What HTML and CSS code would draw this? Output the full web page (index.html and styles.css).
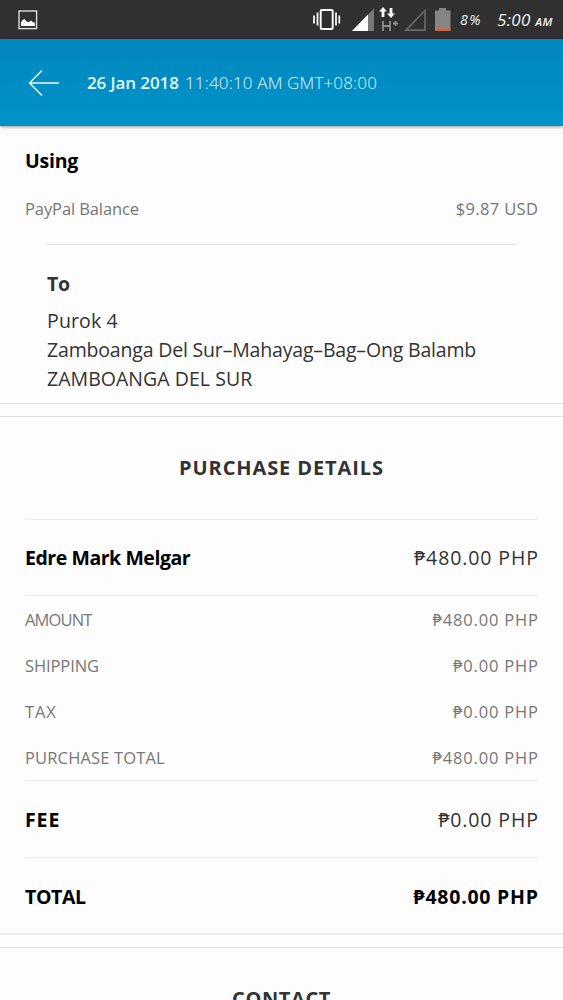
FILE: index.html
```html
<!DOCTYPE html>
<html lang="en">
<head>
<meta charset="utf-8">
<title>Transaction details</title>
<link rel="stylesheet" href="styles.css">
</head>
<body>
<div class="status-bar">
  <svg class="gallery" width="20" height="20" viewBox="0 0 20 20"><rect x="1" y="1" width="17.6" height="17.6" fill="none" stroke="#dcdcdc" stroke-width="1.4"/><path d="M3 16V12.500l1.500-2.500 2-1L8.500 11.500l2 .8 2.500-1.800 1.500 1.500H16l1 1.500V16z" fill="#fff"/></svg>
  <svg class="status-icons" width="152" height="39" viewBox="0 0 152 39">
    <g fill="none" stroke="#fff"><rect x="10.700" y="10" width="12" height="19" rx="1" stroke-width="1.900"/><path d="M7.500 12.500v13M26 12.500v13M4 15.500v8M29.300 15.500v8" stroke-width="1.700"/></g>
    <path d="M64 8.500V31H42z" fill="#777"/><path d="M58 14.500V31H42z" fill="#fff"/>
    <path d="M69 11.500L73 7l4 4.500h-2.600V17h-2.800v-5.500zM77 13.500h2.600V8h2.800v5.500H85L81 18z" fill="#fff"/>
    <path d="M73 21v10M80 21v10M73 26h7M83 23.500h5M85.500 21v5" fill="none" stroke="#8d8d8d" stroke-width="1.800"/>
    <path d="M115 10.500V30.200H96z" fill="none" stroke="#686868" stroke-width="1.700"/>
    <path d="M125 10.500h4V8h7v2.500h4.500V31H125z" fill="#858585"/><path d="M125 28.500h15.500V31H125z" fill="#d8643a"/>
  </svg>
  <span class="battery-text">8%</span>
  <span class="clock">5:00 <small>AM</small></span>
</div>
<header class="app-bar">
  <svg width="32" height="28" viewBox="0 0 32 28"><path d="M14 1.500L1.500 14 14 26.500M1.500 14H31" fill="none" stroke="#e8fbff" stroke-width="1.500"/></svg>
  <span class="date">26 Jan 2018</span><span class="time">11:40:10 AM GMT+08:00</span>
</header>
<main>
  <section class="funding">
    <h2 class="using">Using</h2>
    <div class="row source"><span class="paypal">PayPal Balance</span><span class="usd">$9.87 USD</span></div>
  </section>
  <section class="address">
    <h3>To</h3>
    <p><span class="street">Purok 4</span><br><span class="district">Zamboanga Del Sur–Mahayag–Bag–Ong Balamb</span><br><span class="city">ZAMBOANGA DEL SUR</span></p>
  </section>
  <div class="gap"></div>
  <section class="details">
    <h2 class="title">PURCHASE DETAILS</h2>
    <div class="row item"><b class="name">Edre Mark Melgar</b><span class="big">₱480.00 PHP</span></div>
    <div class="breakdown">
      <div class="row"><span class="amount">AMOUNT</span><span class="small">₱480.00 PHP</span></div>
      <div class="row"><span class="shipping">SHIPPING</span><span class="small">₱0.00 PHP</span></div>
      <div class="row"><span class="tax">TAX</span><span class="small">₱0.00 PHP</span></div>
      <div class="row"><span class="subtotal">PURCHASE TOTAL</span><span class="small">₱480.00 PHP</span></div>
    </div>
    <div class="row item fee"><b>FEE</b><span class="big">₱0.00 PHP</span></div>
    <div class="row item total"><b>TOTAL</b><b class="big">₱480.00 PHP</b></div>
  </section>
  <div class="gap gap-bottom"></div>
  <section class="contact"><h2 class="title">CONTACT</h2></section>
</main>
</body>
</html>
```
FILE: styles.css
```css
* { box-sizing: border-box; margin: 0; padding: 0; }
html, body { height: 1000px; overflow: hidden; }
body { background: #fdfdfd; color: #333; font-family: "Open Sans", "Noto Sans", sans-serif; font-size: 19.5px; white-space: nowrap; }
.status-bar { display: flex; align-items: center; height: 39px; background: #303030; color: #f0f0f0; padding-left: 18px; font-style: italic; }
.status-icons { margin-left: 272px; }
.gallery { flex: none; }
.battery-text { width: 37px; flex: none; font-size: 14px; letter-spacing: 1.6px; margin-left: -2px; }
.clock { font-size: 17px; letter-spacing: .3px; }
.clock small { font-size: 11.5px; font-weight: 600; }
.app-bar { display: flex; align-items: center; height: 87px; padding-left: 28px; color: #e0faff; font-size: 17px; background: linear-gradient(#0087be, #0093c9); box-shadow: 0 1px 3px rgba(0, 0, 0, .4); }
.date { margin-left: 27px; width: 98px; font-weight: 600; letter-spacing: -.1px; }
.time { font-weight: 300; letter-spacing: .17px; }
.row { display: flex; justify-content: space-between; align-items: center; }
.funding { height: 111px; margin-top: 7px; padding: 0 25px; border-top: 1px solid #f6f6f6; }
.using { font-size: 19.5px; line-height: 53px; color: #000; letter-spacing: -.25px; }
.source { height: 43px; font-size: 16.5px; color: #777; }
.paypal { letter-spacing: -.1px; }
.usd { letter-spacing: .35px; margin-right: -.35px; }
.address { margin: 0 46px 0 47px; height: 159px; border-top: 1px solid #e3e3e3; padding-top: 24px; }
h3 { font-size: 19.5px; line-height: 30px; letter-spacing: -.4px; }
.address p { line-height: 29px; padding-top: 7px; }
.street { letter-spacing: .15px; }
.district { letter-spacing: -.18px; }
.city { letter-spacing: .04px; }
.gap { height: 14px; border: solid #e2e2e2; border-width: 1px 0; }
.details { padding: 0 25px; }
.title { height: 102px; line-height: 102px; font-size: 20px; text-align: center; letter-spacing: .9px; }
.contact .title { height: 51px; letter-spacing: .6px; }
.item { height: 76px; border-top: 1px solid #ececec; }
.item b { color: #000; }
.name { letter-spacing: -.45px; }
.big { letter-spacing: .9px; margin-right: -.9px; }
.total .big { letter-spacing: .75px; margin-right: -.75px; }
.breakdown { border-top: 1px solid #ececec; font-size: 16.5px; color: #777; }
.breakdown .row { height: 46px; }
.small { letter-spacing: .83px; margin-right: -.83px; }
.amount { letter-spacing: -.85px; }
.shipping { letter-spacing: -.1px; }
.tax { letter-spacing: .9px; }
.subtotal { letter-spacing: .15px; }
.fee { height: 77px; }
.fee b:first-child { letter-spacing: .9px; }
.total { padding-top: 2px; }
.total b:first-child { letter-spacing: -.4px; }
.gap-bottom { border-top: 2px solid #ececec; height: 15px; }
```
